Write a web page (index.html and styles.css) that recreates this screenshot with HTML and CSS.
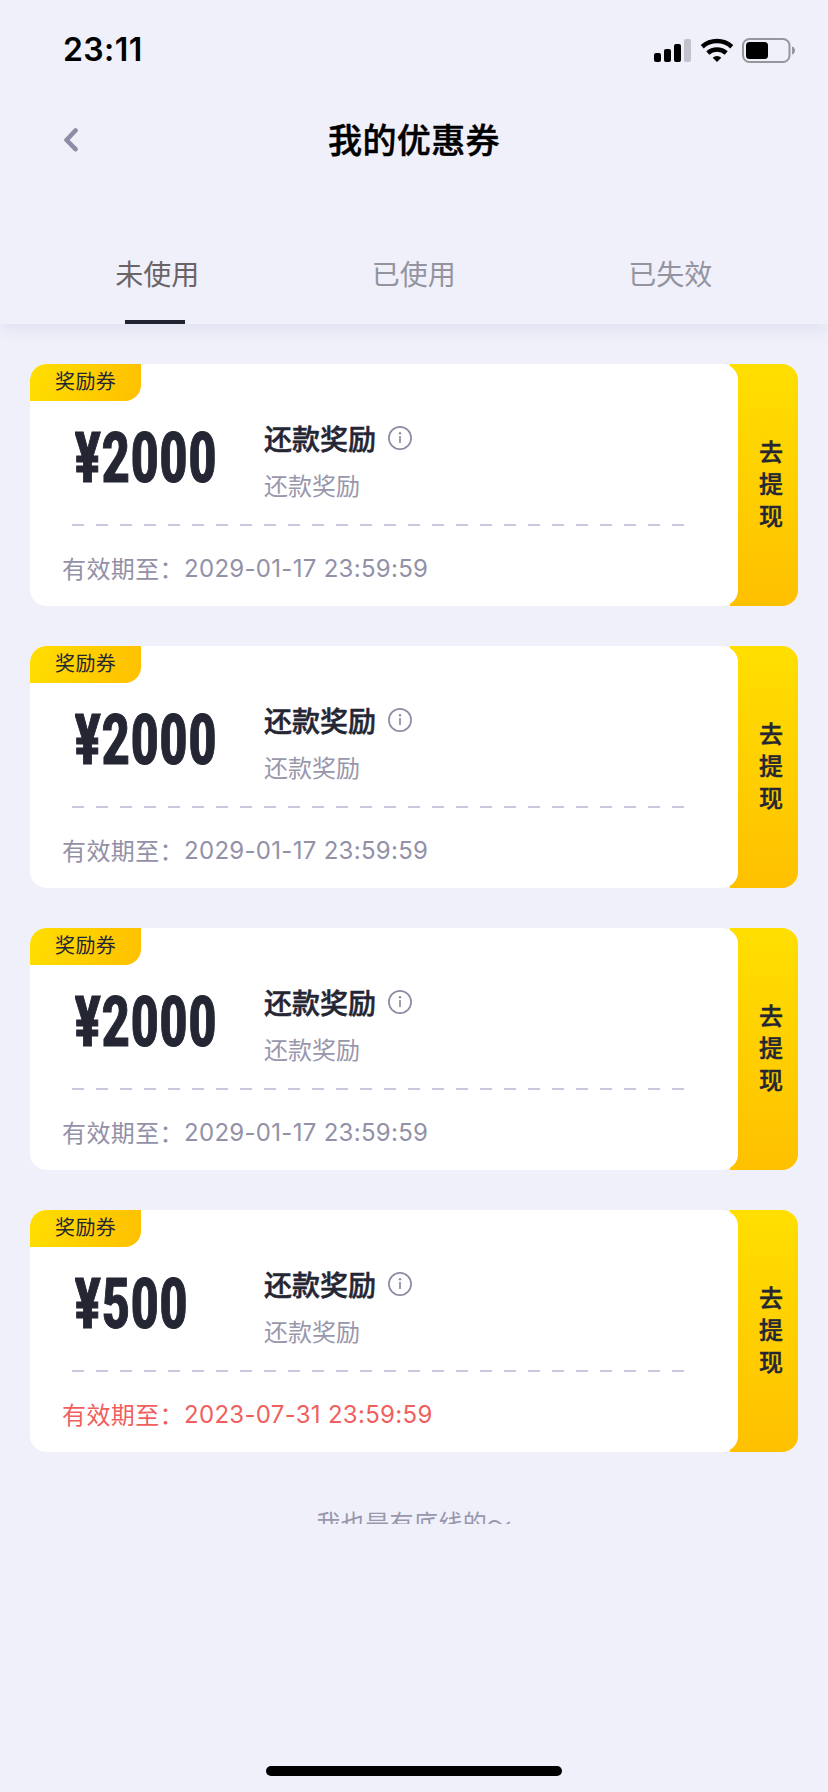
FILE: index.html
```html
<!DOCTYPE html>
<html lang="zh-CN">
<head>
<meta charset="utf-8">
<title>我的优惠券</title>
<link rel="stylesheet" href="styles.css">
</head>
<body>
<svg class="defs" width="0" height="0" aria-hidden="true">
  <symbol id="info" viewBox="0 0 24 24">
    <circle cx="12" cy="12" r="11.1" fill="none" stroke="currentColor" stroke-width="1.700"/>
    <circle cx="12" cy="7.300" r="1.200" fill="currentColor"/>
    <path d="M12 10v7" stroke="currentColor" stroke-width="1.700"/>
  </symbol>
</svg>
<div class="screen">
  <header class="header">
    <div class="status">
      <span class="time">23:11</span>
      <svg class="status-icons" viewBox="0 0 144 28" width="144" height="28">
        <rect x="1" y="16" width="7" height="9" rx="2"/>
        <rect x="11" y="12" width="7" height="13" rx="2"/>
        <rect x="21" y="7" width="7" height="18" rx="2"/>
        <rect x="31" y="2" width="7" height="23" rx="2" fill="#c2c2cc"/>
        <g fill="none" stroke="#000" stroke-width="4.500">
          <path d="M49.200 9.700a22.300 22.300 0 0 1 29.600 0"/>
          <path d="M54.800 16a13.800 13.800 0 0 1 18.400 0"/>
        </g>
        <path d="M64 25l-4.300-4.300a6.200 6.200 0 0 1 8.600 0z"/>
        <rect x="90" y="2" width="46.500" height="23" rx="6.500" fill="none" stroke="#96969f" stroke-width="2"/>
        <rect x="93" y="5" width="22" height="17" rx="3.500"/>
        <path d="M139 9.500c4 1 4 7 0 8z" fill="#96969f"/>
      </svg>
    </div>
    <div class="nav">
      <svg class="back" viewBox="0 0 16 24" width="16" height="24"><path d="M13.500 2.500L4.500 12l9 9.200" fill="none" stroke="#8d8ca6" stroke-width="4.600" stroke-linecap="round" stroke-linejoin="round"/></svg>
      <h1 class="title">我的优惠券</h1>
    </div>
    <nav class="tabs">
      <a class="tab tab-active">未使用</a>
      <a class="tab">已使用</a>
      <a class="tab">已失效</a>
    </nav>
  </header>
  <main class="list">
    <article class="card">
      <div class="face">
        <span class="tag">奖励券</span>
        <div class="info">
          <svg class="amount" width="189" height="96"><text x="-1" y="71" textLength="143" lengthAdjust="spacingAndGlyphs">¥2000</text></svg>
          <div class="desc">
            <div class="name">还款奖励<svg class="info-icon"><use href="#info"/></svg></div>
            <div class="sub">还款奖励</div>
          </div>
        </div>
        <div class="divider"></div>
        <div class="expiry"><span>有效期至：</span><span class="date">2029-01-17 23:59:59</span></div>
      </div>
      <a class="action">去提现</a>
    </article>
    <article class="card">
      <div class="face">
        <span class="tag">奖励券</span>
        <div class="info">
          <svg class="amount" width="189" height="96"><text x="-1" y="71" textLength="143" lengthAdjust="spacingAndGlyphs">¥2000</text></svg>
          <div class="desc">
            <div class="name">还款奖励<svg class="info-icon"><use href="#info"/></svg></div>
            <div class="sub">还款奖励</div>
          </div>
        </div>
        <div class="divider"></div>
        <div class="expiry"><span>有效期至：</span><span class="date">2029-01-17 23:59:59</span></div>
      </div>
      <a class="action">去提现</a>
    </article>
    <article class="card">
      <div class="face">
        <span class="tag">奖励券</span>
        <div class="info">
          <svg class="amount" width="189" height="96"><text x="-1" y="71" textLength="143" lengthAdjust="spacingAndGlyphs">¥2000</text></svg>
          <div class="desc">
            <div class="name">还款奖励<svg class="info-icon"><use href="#info"/></svg></div>
            <div class="sub">还款奖励</div>
          </div>
        </div>
        <div class="divider"></div>
        <div class="expiry"><span>有效期至：</span><span class="date">2029-01-17 23:59:59</span></div>
      </div>
      <a class="action">去提现</a>
    </article>
    <article class="card">
      <div class="face">
        <span class="tag">奖励券</span>
        <div class="info">
          <svg class="amount" width="189" height="96"><text x="-1" y="71" textLength="114" lengthAdjust="spacingAndGlyphs">¥500</text></svg>
          <div class="desc">
            <div class="name">还款奖励<svg class="info-icon"><use href="#info"/></svg></div>
            <div class="sub">还款奖励</div>
          </div>
        </div>
        <div class="divider"></div>
        <div class="expiry expiring"><span>有效期至：</span><span class="date">2023-07-31 23:59:59</span></div>
      </div>
      <a class="action">去提现</a>
    </article>
    <p class="end">我也是有底线的～</p>
  </main>
  <div class="home-bar"></div>
</div>
</body>
</html>
```

FILE: styles.css
```css
* { box-sizing: border-box; }
body {
  margin: 0;
  background: #f0f0fb;
  font-family: "Noto Sans CJK SC", sans-serif;
  color: #252633;
}
.defs { display: block; height: 0; }
.screen {
  width: 828px;
  height: 1792px;
  display: flex;
  flex-direction: column;
  overflow: hidden;
}
.header {
  height: 324px;
  flex: none;
  display: flex;
  flex-direction: column;
  box-shadow: 0 8px 12px #e2e5f2;
  background: #f0f0fb;
}
.status {
  height: 100px;
  padding: 0 31px 0 63px;
  display: flex;
  justify-content: space-between;
  align-items: center;
}
.time {
  font: 600 32px/40px Inter, sans-serif;
  letter-spacing: .4px;
}
.time, .title { color: #000; }
.status-icons { margin-top: 1px; }
.nav {
  height: 80px;
  padding: 0 62px;
  display: grid;
  grid-template-columns: 16px 1fr 16px;
  align-items: center;
}
.title {
  margin: -3px 0 0;
  text-align: center;
  font-size: 34px;
  line-height: 50px;
  font-weight: 500;
  letter-spacing: .4px;
  -webkit-text-stroke: .5px currentColor;
}
.tabs {
  flex: 1;
  margin: 0 28px 0 29px;
  display: grid;
  grid-template-columns: repeat(3, 256.5px);
  padding-top: 71px;
}
.tab {
  font-size: 28px;
  line-height: 44px;
  font-weight: 400;
  color: #9494a0;
  display: flex;
  flex-direction: column;
  align-items: center;
}
.tab-active { color: #6a6466; }
.tab-active::after {
  content: "";
  width: 60px;
  height: 4px;
  margin-top: auto;
  margin-right: 4px;
  background: #212230;
}
.list {
  height: 1200px;
  flex: none;
  padding: 40px 30px 0;
  display: flex;
  flex-direction: column;
  gap: 40px;
  overflow: hidden;
}
.card {
  height: 242px;
  flex: none;
  display: flex;
  border-radius: 16px;
  overflow: hidden;
  background: linear-gradient(#ffdf00, #ffc000) right / 68px 100% no-repeat;
}
.face {
  width: 708px;
  background: #fff;
  border-radius: 16px;
}
.tag {
  display: block;
  width: 111px;
  height: 37px;
  padding-left: 25px;
  border-radius: 16px 0;
  background: linear-gradient(100deg, #ffde00, #ffc000);
  font-size: 20px;
  line-height: 34px;
  letter-spacing: .4px;
}
.info {
  height: 123px;
  padding: 19px 0 0 45px;
  display: flex;
}
.amount {
  display: block;
  margin-top: -9px;
  fill: #252633;
  stroke: #252633;
  stroke-width: 1px;
  font: 700 71px Roboto, sans-serif;
  font-stretch: 75%;
}
.name {
  display: flex;
  align-items: center;
  gap: 12px;
  font-size: 28px;
  line-height: 36px;
  font-weight: 500;
  -webkit-text-stroke: .5px currentColor;
}
.info-icon {
  width: 24px;
  height: 24px;
  color: #8d8ca3;
}
.sub {
  margin-top: 12px;
  font-size: 24px;
  line-height: 34px;
  font-weight: 400;
  color: #9897ac;
}
.divider {
  width: 612px;
  height: 2px;
  margin-left: 42px;
  background: repeating-linear-gradient(90deg, #c8c9dd 0 12px, transparent 12px 24px);
}
.expiry {
  margin-top: 22px;
  padding-left: 32px;
  display: flex;
  align-items: center;
  font-size: 24px;
  line-height: 38px;
  font-weight: 400;
  letter-spacing: .4px;
  color: #9291a8;
}
.expiring { color: #f05f5e; }
.date {
  padding-top: 2px;
  font-family: Inter, sans-serif;
  letter-spacing: .3px;
}
.action {
  width: 60px;
  padding: 71px 15px 0 21px;
  font-size: 24px;
  line-height: 32px;
  font-weight: 500;
  word-break: break-all;
  -webkit-text-stroke: .4px currentColor;
}
.end {
  margin: -27px 0 0;
  padding-top: 39px;
  flex: none;
  text-align: center;
  font-size: 24px;
  line-height: 36px;
  font-weight: 400;
  letter-spacing: .4px;
  color: #9897ac;
}
.home-bar {
  width: 296px;
  height: 10px;
  margin: auto auto 16px;
  border-radius: 5px;
  background: #000;
}
```
